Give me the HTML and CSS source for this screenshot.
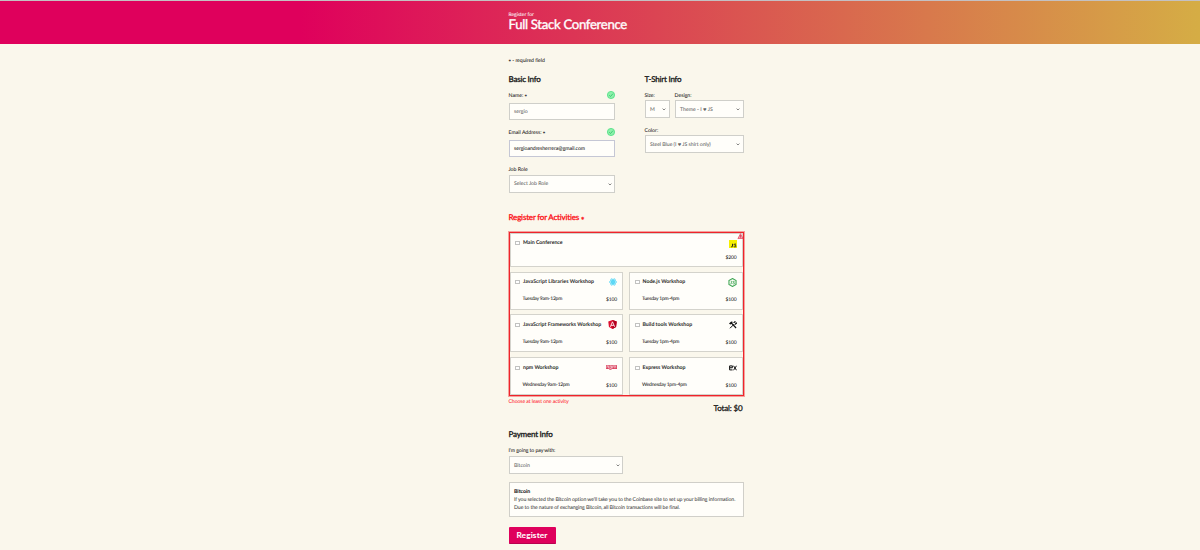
FILE: index.html
```html
<!DOCTYPE html>
<html lang="en">
<head>
<meta charset="utf-8">
<title>Full Stack Conference</title>
<link rel="stylesheet" href="styles.css">
</head>
<body>
<svg class="defs" width="0" height="0">
  <symbol id="check" viewBox="0 0 16 16"><circle cx="8" cy="8" r="7.2" fill="#8df0aa" stroke="#4be083" stroke-width="1.6"/><path d="M4.4 8.4l2.6 2.6 4.8-5.6" fill="none" stroke="#25bf63" stroke-width="1.5"/></symbol>
  <symbol id="chev" viewBox="0 0 10 6"><path d="M1.5 1l3.5 3.5L8.5 1" fill="none" stroke="#555" stroke-width="1.8"/></symbol>
</svg>
<header class="banner">
  <div class="column">
    <p class="banner-sub">Register for</p>
    <h1 class="banner-title">Full Stack Conference</h1>
  </div>
</header>
<form class="column form">
  <p class="note"><b class="star">*</b> - required field</p>
  <div class="top">
    <section class="basic">
      <h2>Basic Info</h2>
      <div class="label"><span>Name: <b class="star">*</b></span><svg class="tick"><use href="#check"/></svg></div>
      <div class="field name">sergio</div>
      <div class="label email-label"><span>Email Address: <b class="star">*</b></span><svg class="tick"><use href="#check"/></svg></div>
      <div class="field email">sergioandresherrera@gmail.com</div>
      <div class="label job-label"><span>Job Role</span></div>
      <div class="field job"><span>Select Job Role</span><svg class="chev"><use href="#chev"/></svg></div>
    </section>
    <section class="shirt">
      <h2>T-Shirt Info</h2>
      <div class="shirt-row">
        <div class="size"><div class="label"><span>Size:</span></div><div class="field"><span>M</span><svg class="chev"><use href="#chev"/></svg></div></div>
        <div class="design"><div class="label"><span>Design:</span></div><div class="field"><span>Theme - I <i class="heart">♥</i> JS</span><svg class="chev"><use href="#chev"/></svg></div></div>
      </div>
      <div class="label color-label"><span>Color:</span></div>
      <div class="field color"><span>Steel Blue (I <i class="heart">♥</i> JS shirt only)</span><svg class="chev"><use href="#chev"/></svg></div>
    </section>
  </div>
  <h2 class="act-title">Register for Activities <b class="star">*</b></h2>
  <div class="activities">
    <svg class="warn" viewBox="0 0 14 14"><path d="M7 1.5L13 13H1z" fill="#f8a0ac" stroke="#e23a55" stroke-width="1.6"/><path d="M7 5v4M7 10.3v1.5" stroke="#c81e3c" stroke-width="1.6"/></svg>
    <div class="card main">
      <div class="card-head"><i class="box"></i><b>Main Conference</b><svg class="logo" viewBox="0 0 16 16"><path fill="#f5ef00" d="M0 0h16v16H0z"/><path d="M7 7.5v5.2q0 1.5-2.7.8M14 8.5q-3.5-1.5-3.7.5c0 1.8 3.7 1 3.7 3.2 0 2-3 1.8-4.5.8" fill="none" stroke="#222" stroke-width="1.9"/></svg></div>
      <div class="card-foot"><span></span><span class="price">$200</span></div>
    </div>
    <div class="card">
      <div class="card-head"><i class="box"></i><b class="wide">JavaScript Libraries Workshop</b><svg class="logo" viewBox="0 0 16 16"><g fill="none" stroke="#45d3f5" stroke-width="1.5"><ellipse cx="8" cy="8" rx="7.3" ry="2.8"/><ellipse cx="8" cy="8" rx="7.3" ry="2.8" transform="rotate(60 8 8)"/><ellipse cx="8" cy="8" rx="7.3" ry="2.8" transform="rotate(120 8 8)"/></g><circle cx="8" cy="8" r="1.8" fill="#2ccbf2"/></svg></div>
      <div class="card-foot"><span>Tuesday 9am-12pm</span><span class="price">$100</span></div>
    </div>
    <div class="card">
      <div class="card-head"><i class="box"></i><b>Node.js Workshop</b><svg class="logo large" viewBox="0 0 16 16"><path d="M8 .9l6.300 3.500v7.200L8 15.100l-6.300-3.500V4.400z" fill="none" stroke="#3fa653" stroke-width="1.9"/><path d="M6 5v4.500q0 1.800-1.800 1M11.600 6.200q-3.300-1-3.300.6c0 1.500 3.500.7 3.500 2.500 0 1.700-2.700 1.500-3.800.5" fill="none" stroke="#3fa653" stroke-width="1.4"/></svg></div>
      <div class="card-foot"><span>Tuesday 1pm-4pm</span><span class="price">$100</span></div>
    </div>
    <div class="card">
      <div class="card-head"><i class="box"></i><b>JavaScript Frameworks Workshop</b><svg class="logo large" viewBox="0 0 16 16"><path fill="#dd1030" d="M8 0l7.500 2.700-1.200 9.800L8 16l-6.300-3.500L.5 2.700z"/><path fill="#b3001e" d="M8 0l7.500 2.700-1.200 9.800L8 16z"/><path d="M4.200 12L8 3.200l3.800 8.800M5.500 9.500h5" fill="none" stroke="#fff" stroke-width="1.5"/></svg></div>
      <div class="card-foot"><span>Tuesday 9am-12pm</span><span class="price">$100</span></div>
    </div>
    <div class="card">
      <div class="card-head"><i class="box"></i><b>Build tools Workshop</b><svg class="logo" viewBox="0 0 16 16"><path d="M0 5l4.500-4 4 1-2.500 1.500L15 13l-1.700 1.800L5 6.200 2.500 6.800z" fill="#111"/><path d="M2 14.500l8-8M9.500 4q.5-3 3-3L11.600 3.500l1.500 1.300 2.200-1.300q0 3.500-4 3.200" fill="none" stroke="#111" stroke-width="2"/></svg></div>
      <div class="card-foot"><span>Tuesday 1pm-4pm</span><span class="price">$100</span></div>
    </div>
    <div class="card">
      <div class="card-head"><i class="box"></i><b>npm Workshop</b><svg class="logo npm" viewBox="0 0 24 10"><path d="M0 0h24v8.500H12V10H7V8.500H0z" fill="#d8304f"/><path d="M2 7V2h3.500v5M8.500 9V2H12v4.800H9M14.500 7V2h7v5M18 3v4" fill="none" stroke="#fff" stroke-width="1.3"/></svg></div>
      <div class="card-foot"><span>Wednesday 9am-12pm</span><span class="price">$100</span></div>
    </div>
    <div class="card">
      <div class="card-head"><i class="box"></i><b>Express Workshop</b><svg class="logo" viewBox="0 0 16 16"><path d="M7 3.800H1.200v8H7M1.200 7.500h5.500V4M9 3.500l6 9M15 3.500l-6 9" fill="none" stroke="#111" stroke-width="2"/></svg></div>
      <div class="card-foot"><span>Wednesday 1pm-4pm</span><span class="price">$100</span></div>
    </div>
  </div>
  <div class="summary"><span class="hint">Choose at least one activity</span><span class="total">Total: $0</span></div>
  <h2 class="pay-title">Payment Info</h2>
  <div class="label pay-label"><span>I'm going to pay with:</span></div>
  <div class="field pay"><span>Bitcoin</span><svg class="chev"><use href="#chev"/></svg></div>
  <div class="bitcoin">
    <b>Bitcoin</b>
    <p>If you selected the Bitcoin option we'll take you to the Coinbase site to set up your billing information.</p>
    <p>Due to the nature of exchanging Bitcoin, all Bitcoin transactions will be final.</p>
  </div>
  <button class="register" type="button">Register</button>
</form>
</body>
</html>
```
FILE: styles.css
```css
* { box-sizing: border-box; margin: 0; padding: 0; }
body { height: 550px; overflow: hidden; background: #faf7ec; color: #222; font: 5.2px/8px Lato, "DejaVu Sans", sans-serif; -webkit-text-stroke: .05px currentColor; text-rendering: geometricPrecision; }
svg { display: block; flex: none; }
.defs { position: absolute; }
.column { width: 235px; margin-left: 508.5px; white-space: nowrap; }
.banner { height: 44px; border-top: 1px solid #c4c0c2; padding-top: 11px; color: #fff; background: linear-gradient(90deg, #df005c 0, #df005c 25%, #d5ad45 100%); }
.banner-sub { height: 6px; line-height: 7px; font-size: 5px; }
.banner-title { font: 400 13.2px/12px Lato, sans-serif; letter-spacing: -.32px; -webkit-text-stroke: .35px #fff; }
.form { padding-top: 13px; }
.note { height: 8px; letter-spacing: -.06px; }
.star { font-size: 6px; line-height: 0; vertical-align: -1.5px; }
.top { display: flex; justify-content: space-between; margin-top: 9px; height: 119px; }
.basic { width: 106.5px; }
.shirt { width: 99px; }
h2 { height: 11px; font: 500 8px/11px Lato, sans-serif; letter-spacing: -.23px; color: #111; -webkit-text-stroke: .25px currentColor; }
.label { display: flex; justify-content: space-between; align-items: center; height: 8px; }
.label > span { position: relative; top: .7px; }
.basic h2 + .label, .shirt-row { margin-top: 6px; }
.tick { width: 8px; height: 8px; }
.field { display: flex; justify-content: space-between; align-items: center; height: 18px; padding: 1px 2.5px 0 4.5px; border: 1px solid #cfcfca; background: #fffefa; color: #666; }
.name, .email { height: 17.5px; }
.name { margin-top: 3.5px; }
.email-label { margin-top: 8px; }
.email { margin-top: 3.5px; border-color: #c5c7d5; color: #222; letter-spacing: -.05px; }
.job-label { margin-top: 8px; }
.job { margin-top: 1.5px; }
.chev { width: 4px; height: 2.8px; }
.heart { font: normal 4px/1 "DejaVu Sans", sans-serif; }
.shirt-row { display: flex; justify-content: space-between; }
.size { width: 25px; }
.design { width: 69px; }
.shirt .field { margin-top: 1px; }
.color { letter-spacing: -.04px; }
.color-label { margin-top: 8px; }
.act-title { margin-top: 19px; color: #fb0d14; letter-spacing: -.19px; }
.act-title .star { font-size: 8px; vertical-align: -3px; }
.activities { position: relative; display: grid; grid-template-columns: 113.5px 113.5px; grid-template-rows: 34px 38px 38px 38px; justify-content: space-between; row-gap: 4.7px; height: 163.5px; margin-top: 9px; border: 1.5px solid #ee242b; outline: .5px solid #f7a09c; }
.warn { position: absolute; right: -1px; top: 0; width: 7px; height: 6px; }
.card { display: flex; flex-direction: column; justify-content: space-between; padding: 5.5px 5px 5.5px 4.5px; border: 1px solid #d4d3cc; background: #fffefa; }
.main { grid-column: 1 / 3; padding-top: 5px; padding-bottom: 4px; }
.card-head { display: flex; align-items: center; height: 8px; color: #333; }
.card-head .logo { margin-left: auto; width: 8px; height: 8px; }
.card-head .large { width: 9px; height: 9px; }
.main .logo { position: relative; top: .5px; }
.card-head .npm { width: 11px; height: 5px; }
.wide { letter-spacing: .05px; }
.box { width: 5px; height: 4px; margin-right: 3px; border: 1px solid #c2c2c0; background: #fff; }
.card-foot { display: flex; justify-content: space-between; height: 7px; line-height: 7px; font-size: 5px; letter-spacing: -.22px; padding-left: 7.5px; }
.price { position: relative; top: 1px; letter-spacing: -.15px; }
.main .price { top: 0; }
.summary { display: flex; justify-content: space-between; height: 19.5px; padding-top: 2.5px; }
.hint { color: #ff2a35; letter-spacing: -.1px; }
.total { font-size: 8px; line-height: 20px; height: 19px; color: #111; letter-spacing: -.15px; margin-right: 1px; -webkit-text-stroke: .25px #111; }
.pay-title { margin-top: 14px; margin-bottom: 6px; }
.pay-label { letter-spacing: -.08px; }
.pay { width: 114.5px; margin-top: 2px; }
.bitcoin { height: 35px; margin-top: 8px; padding: 4.5px 4.5px; border: 1px solid #d0cfc9; background: #fffefa; color: #444; letter-spacing: -.085px; }
.bitcoin b { display: block; color: #111; letter-spacing: 0; }
.register { display: block; width: 47px; height: 16.5px; margin-top: 10px; border: 0; border-bottom: 1px solid #b80050; border-radius: 1px; background: #df005c; color: #fff; font: 700 8.3px/17px Lato, sans-serif; letter-spacing: .12px; }
```
